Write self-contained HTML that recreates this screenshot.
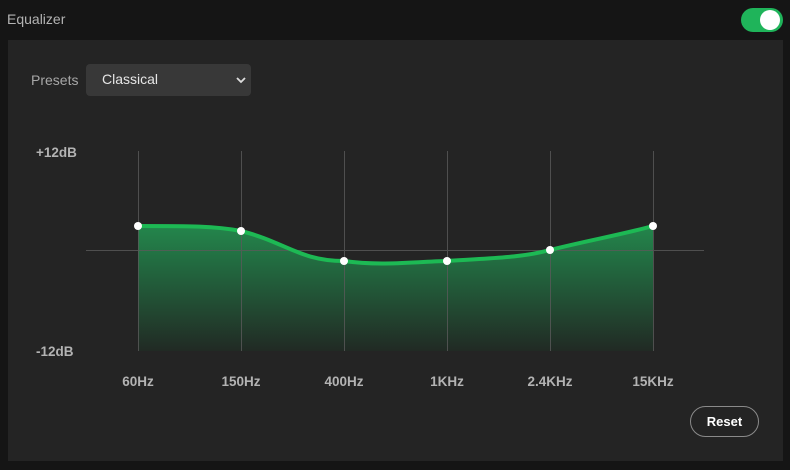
<!DOCTYPE html>
<html><head><meta charset="utf-8"><style>
*{margin:0;padding:0;box-sizing:border-box}
body{width:790px;height:470px;background:#151515;font-family:"Liberation Sans",sans-serif;position:relative;overflow:hidden}
.title{position:absolute;left:7px;top:11px;font-size:14px;color:#b3b3b3}
.toggle{position:absolute;left:741px;top:8px;width:42px;height:24px;border-radius:12px;background:#1fb45a}
.toggle:after{content:"";position:absolute;right:3px;top:2px;width:20px;height:20px;border-radius:50%;background:#fff}
.panel{position:absolute;left:8px;top:40px;width:775px;height:421px;background:#242424}
.pl{position:absolute;left:31px;top:72px;font-size:14px;color:#a7a7a7}
.sel{position:absolute;left:86px;top:64px;width:165px;height:32px;border-radius:4px;background:#383838;color:#e6e6e6;font-size:14px;padding:7px 16px}
.sel svg{position:absolute;right:5px;top:12px}
.reset{position:absolute;left:690px;top:406px;width:69px;height:31px;border:1px solid #8a8a8a;border-radius:16px;color:#fff;font-weight:bold;font-size:13px;text-align:center;line-height:29px}
svg.g{position:absolute;left:0;top:0}
</style></head><body>
<div class="title">Equalizer</div>
<div class="toggle"></div>
<div class="panel"></div>
<div class="pl">Presets</div>
<div class="sel">Classical<svg width="10" height="8" viewBox="0 0 10 8"><path d="M1 2 L5 6 L9 2" stroke="#ddd" stroke-width="1.8" fill="none"/></svg></div>
<svg class="g" width="790" height="470">
<defs><linearGradient id="f" gradientUnits="userSpaceOnUse" x1="0" y1="226" x2="0" y2="351">
<stop offset="0" stop-color="#23864c"/><stop offset="1" stop-color="#212a24"/></linearGradient></defs>
<path d="M138 226 C190 226 215 226 241 231 C285 242 300 261 344 261 C380 266 410 262 447 261 C490 258 520 258 550 250 C590 240 620 235 653 226 L653 351 L138 351 Z" fill="url(#f)"/>
<g stroke="#5a5a5a" stroke-width="1" opacity=".8">
<line x1="138.5" y1="151" x2="138.5" y2="351"/><line x1="241.5" y1="151" x2="241.5" y2="351"/>
<line x1="344.5" y1="151" x2="344.5" y2="351"/><line x1="447.5" y1="151" x2="447.5" y2="351"/>
<line x1="550.5" y1="151" x2="550.5" y2="351"/><line x1="653.5" y1="151" x2="653.5" y2="351"/>
<line x1="86" y1="250.5" x2="704" y2="250.5"/></g>
<path d="M138 226 C190 226 215 226 241 231 C285 242 300 261 344 261 C380 266 410 262 447 261 C490 258 520 258 550 250 C590 240 620 235 653 226" fill="none" stroke="#1db954" stroke-width="4"/>
<g fill="#fff"><circle cx="138" cy="226" r="4"/><circle cx="241" cy="231" r="4"/><circle cx="344" cy="261" r="4"/><circle cx="447" cy="261" r="4"/><circle cx="550" cy="250" r="4"/><circle cx="653" cy="226" r="4"/></g>
<g fill="#b3b3b3" font-family="Liberation Sans,sans-serif" font-weight="bold" font-size="13.5">
<text x="36" y="157">+12dB</text><text x="36" y="356">-12dB</text>
<g text-anchor="middle"><text x="138" y="386">60Hz</text><text x="241" y="386">150Hz</text><text x="344" y="386">400Hz</text><text x="447" y="386">1KHz</text><text x="550" y="386">2.4KHz</text><text x="653" y="386">15KHz</text></g></g>
</svg>
<div class="reset">Reset</div>
</body></html>
